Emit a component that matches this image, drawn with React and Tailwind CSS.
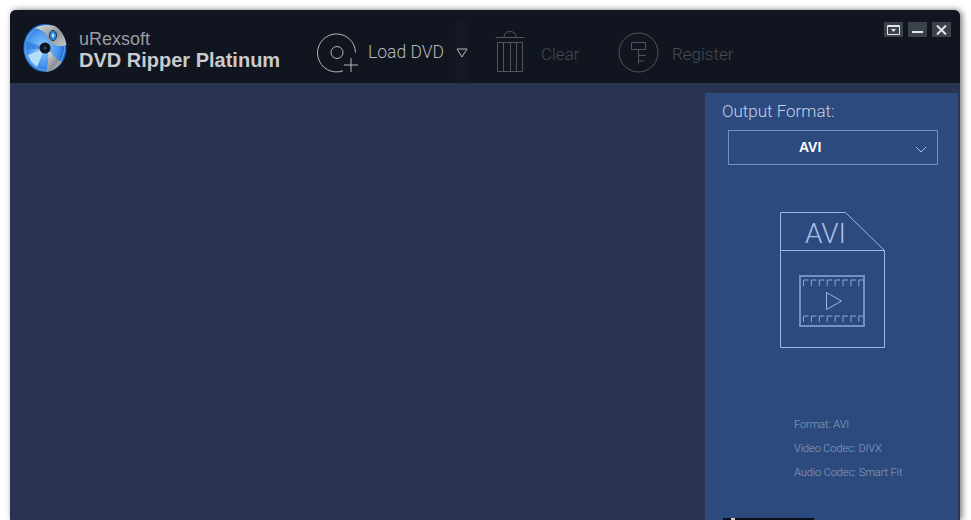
import React from "react";

const Logo = () => (
  <svg width="46" height="50" viewBox="0 0 46 50" className="shrink-0">
    <defs>
      <radialGradient id="disc" cx="45%" cy="50%" r="55%">
        <stop offset="0%" stopColor="#8fc8fa" />
        <stop offset="65%" stopColor="#4696ef" />
        <stop offset="100%" stopColor="#1a5ec8" />
      </radialGradient>
      <linearGradient id="metal" x1="0" y1="0" x2="1" y2="1">
        <stop offset="0%" stopColor="#e4e2dc" />
        <stop offset="55%" stopColor="#8e9196" />
        <stop offset="100%" stopColor="#c9cbce" />
      </linearGradient>
    </defs>
    <ellipse cx="22" cy="25" rx="21.5" ry="24" fill="url(#disc)" />
    <ellipse cx="22" cy="25" rx="19.5" ry="22" fill="none" stroke="#7fc0f7" strokeWidth="1" opacity="0.7" />
    <path d="M22 25 L5 32 Q7 39 14 44Z" fill="#b5dcfb" />
    <path d="M22 25 L3 18 Q2 22 3 27Z" fill="#2f79dc" opacity="0.7" />
    <path d="M12 5 Q22 0 32 3 Q41 8 43.5 22 Q36 24 30 21.5 Q25 18 24 13 Q21 7 12 5Z" fill="url(#metal)" />
    <path d="M25 29 Q26 40 23 49 Q32 48 39 39 Q32 36 28 29Z" fill="url(#metal)" />
    <ellipse cx="30" cy="12.5" rx="3.5" ry="5" fill="#2d8be8" stroke="#0d2a55" strokeWidth="1" />
    <ellipse cx="30" cy="12.5" rx="1.2" ry="2" fill="#bde3ff" />
    <circle cx="22" cy="25" r="5.5" fill="#0c1420" />
    <circle cx="22" cy="25" r="1.5" fill="#3b4a60" />
  </svg>
);

const LoadIcon = () => (
  <svg width="42" height="42" viewBox="0 0 42 42" fill="none" stroke="#b4b8bf" strokeWidth="1" className="shrink-0">
    <path d="M38.5 20.5 A19 19 0 1 0 26 38.8" />
    <circle cx="20" cy="20.5" r="6" />
    <path d="M34 26v14M27 33h14" />
  </svg>
);

const TrashIcon = () => (
  <svg width="32" height="42" viewBox="0 0 32 42" fill="none" stroke="#50555d" strokeWidth="1" className="shrink-0">
    <path d="M0.5 6.5h29M9 6.5 Q9 0.5 15 0.5 Q21 0.5 21 6.5" />
    <path d="M2.5 11.5h25v29h-25z" />
    <path d="M8.5 11.5v29M15.5 11.5v29M21.5 11.5v29" />
  </svg>
);

const KeyIcon = () => (
  <svg width="42" height="42" viewBox="0 0 42 42" fill="none" stroke="#50555d" strokeWidth="1" className="shrink-0">
    <circle cx="20.5" cy="20.5" r="19.5" />
    <path d="M13.5 10.5h14v7h-14zM20.5 17.5v15M20.5 23.5h7M20.5 29h5" />
  </svg>
);

const WinBtn = ({ children }) => (
  <div className="w-[19px] h-[15px] bg-[#3c424c] flex items-center justify-center">{children}</div>
);

const ticks = [0, 1, 2, 3, 4, 5, 6, 7];

const AviFile = () => (
  <svg width="108" height="138" viewBox="0 0 108 138" fill="none" stroke="#9db7e0" strokeWidth="1" className="shrink-0">
    <path d="M1.5 1.5h65l39 38v97h-104z" />
    <path d="M1.5 39.5h104" />
    <path d="M21 65h64v50h-64z" strokeWidth="2" stroke="#7391c8" />
    {ticks.map((i) => (
      <g key={i} stroke="#8ba7d8">
        <path d={`M${24.5 + i * 7.9} 75v-6h5`} />
        <path d={`M${24.5 + i * 7.9} 111v-6h5`} />
      </g>
    ))}
    <path d="M47.5 81.5l15 8.5-15 8.5z" />
  </svg>
);

const App = () => {
  return (
    <div className="w-[971px] h-[520px] bg-white overflow-hidden pt-[10px] pl-[10px]">
      <div
        className="w-[950px] h-[510px] bg-[#293550] rounded-t-[6px] overflow-hidden flex flex-col shadow-[2px_0_6px_rgba(0,0,0,0.55)]"
        style={{ fontFamily: '"Liberation Sans", sans-serif' }}
      >
        {/* title bar */}
        <div className="h-[73px] bg-[#10151f] flex shrink-0">
          <div className="flex items-start pl-[13px] pt-[13px] w-[307px] shrink-0">
            <Logo />
            <div className="ml-[10px] pt-[6px]">
              <p className="text-[18px] leading-[20px] text-[#9a9da3]">uRexsoft</p>
              <p className="text-[20px] leading-[22px] font-bold text-[#c9cbce] whitespace-nowrap">DVD Ripper Platinum</p>
            </div>
          </div>

          <div className="pt-[22px] shrink-0">
            <LoadIcon />
          </div>
          <span
            className="ml-[9px] mt-[30px] text-[17.5px] leading-[24px] text-[#b4b8bf] font-light whitespace-nowrap w-[76px] shrink-0"
            style={{ fontFamily: "Roboto, sans-serif" }}
          >
            Load DVD
          </span>

          {/* dropdown arrow sits on a slightly lighter strip */}
          <div className="ml-[11px] mt-[12px] w-[13px] bg-[#131822] shrink-0 pt-[26px]">
            <svg width="12" height="10" viewBox="0 0 12 10" fill="none" stroke="#b4b8bf" className="ml-[1px]">
              <path d="M1 1h10l-5 8z" />
            </svg>
          </div>

          <div className="ml-[27px] pt-[21px] shrink-0">
            <TrashIcon />
          </div>
          <span
            className="ml-[14px] mt-[33px] text-[17px] leading-[22px] text-[#464b54] font-light w-[39px] shrink-0"
            style={{ fontFamily: "Roboto, sans-serif" }}
          >
            Clear
          </span>

          <div className="ml-[38px] pt-[22px] shrink-0">
            <KeyIcon />
          </div>
          <span
            className="ml-[12px] mt-[33px] text-[17px] leading-[22px] text-[#464b54] font-light shrink-0"
            style={{ fontFamily: "Roboto, sans-serif" }}
          >
            Register
          </span>

          <div className="ml-auto flex items-start gap-[5px] pt-[12px] pr-[9px]">
            <WinBtn>
              <svg width="13" height="10" viewBox="0 0 13 10" fill="none" stroke="#e4e5e7">
                <path d="M0.5 0.5h12v9h-12z" />
                <path d="M0.5 1.5h12" />
                <path d="M4 4h5l-2.5 3z" fill="#e4e5e7" stroke="none" />
              </svg>
            </WinBtn>
            <WinBtn>
              <div className="w-[11px] h-[2px] mt-[4px] bg-[#e4e5e7]" />
            </WinBtn>
            <WinBtn>
              <svg width="11" height="10" viewBox="0 0 11 10" fill="none" stroke="#e4e5e7" strokeWidth="2">
                <path d="M1 0.5l9 9M10 0.5l-9 9" />
              </svg>
            </WinBtn>
          </div>
        </div>

        {/* body */}
        <div className="flex-1 flex justify-end pr-[2px] pt-[10px]">
          <div className="w-[253px] bg-[#2c4a7e] flex flex-col">
            <p className="pl-[17px] pt-[7px] text-[17px] leading-[22px] font-light text-[#c3d0e6]" style={{ fontFamily: "Roboto, sans-serif" }}>
              Output Format:
            </p>
            <div className="ml-[23px] mt-[8px] w-[210px] h-[35px] border border-[#7390c4] flex items-center relative">
              <span className="pl-[70px] text-[14px] font-bold text-white">AVI</span>
              <svg width="12" height="7" viewBox="0 0 12 7" fill="none" stroke="#a9bfe4" className="absolute right-[10px] top-[15px]">
                <path d="M1 1l5 5 5-5" />
              </svg>
            </div>

            <div className="ml-[74px] mt-[46px] relative w-[108px]">
              <AviFile />
              <span className="absolute left-[26px] top-[5px] text-[28px] leading-[36px] font-light text-[#a9bfe4]" style={{ fontFamily: "Roboto, sans-serif" }}>
                AVI
              </span>
            </div>

            <div className="ml-[89px] mt-[67px] flex flex-col gap-[6px] text-[11px] leading-[18px] tracking-[-0.1px] text-[#8fa0bc] font-light" style={{ fontFamily: "Roboto, sans-serif" }}>
              <p>Format: AVI</p>
              <p>Video Codec: DIVX</p>
              <p>Audio Codec: Smart Fit</p>
            </div>

            <div className="ml-[18px] mt-[36px] w-[91px] h-[2px] bg-[#0b0f18] shrink-0 flex">
              <div className="ml-[8px] w-[4px] h-[2px] bg-[#c9cbce]" />
            </div>
          </div>
        </div>
      </div>
    </div>
  );
};

export default App;
